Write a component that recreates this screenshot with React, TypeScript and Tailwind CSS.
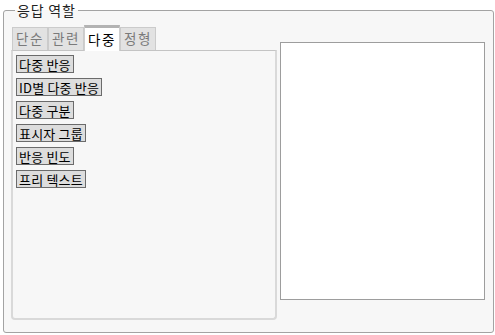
import React from 'react'

const tabs = ['단순', '관련', '다중', '정형']
const roles = ['다중 반응', 'ID별 다중 반응', '다중 구분', '표시자 그룹', '반응 빈도', '프리 텍스트']

export default function App() {
  const active = 2
  return (
    <div
      className="w-[495px] h-[335px] bg-white pl-[3px] pr-[2px] pt-[2px] pb-[2px]"
      style={{ fontFamily: '"Noto Sans CJK KR", "Noto Sans", sans-serif' }}
    >
      <fieldset className="h-full border border-[#a3a3a3] rounded-[3px] bg-[#f7f7f7] pl-[7px] pr-[8px]">
        <legend className="ml-[4px] px-[2px] text-[14px] tracking-[0.8px] leading-[16px] text-[#222]">응답 역할</legend>

        <div className="flex items-start gap-[3px]">
          {/* tab control */}
          <div className="w-[266px] mt-[6px] flex flex-col">
            <div className="flex items-end h-[26px] pl-[1px]">
              {tabs.map((t, i) =>
                i === active ? (
                  <div
                    key={t}
                    className="w-[36px] h-[26px] -mb-[1px] bg-white border-x border-[#cfcfcf] border-t-[3px] border-t-[#b3b3b3] flex items-center justify-center text-[13.5px] tracking-[1.5px] leading-none text-black relative z-10"
                  >
                    {t}
                  </div>
                ) : (
                  <div
                    key={t}
                    className="w-[36px] h-[23px] bg-[#e2e2e2] border border-b-0 border-[#cbcbcb] flex items-center justify-center text-[13.5px] tracking-[1.5px] leading-none text-[#7a7a7a]"
                  >
                    {t}
                  </div>
                )
              )}
            </div>
            <div className="h-[270px] border-2 border-t border-[#d9d9d9] border-t-[#c4c4c4] rounded-b-[4px] bg-[#f7f7f7] pl-[3px] pt-[4px] flex flex-col items-start gap-[5px]">
              {roles.map(r => (
                <button
                  key={r}
                  className="h-[18px] px-[2px] border border-[#6b6b6b] bg-[#dddddd] text-[13px] tracking-[0.2px] leading-none text-black"
                >
                  {r}
                </button>
              ))}
            </div>
          </div>

          {/* preview box */}
          <div className="mt-[24px] w-[205px] h-[258px] border border-[#9d9d9d] bg-white" />
        </div>
      </fieldset>
    </div>
  )
}
